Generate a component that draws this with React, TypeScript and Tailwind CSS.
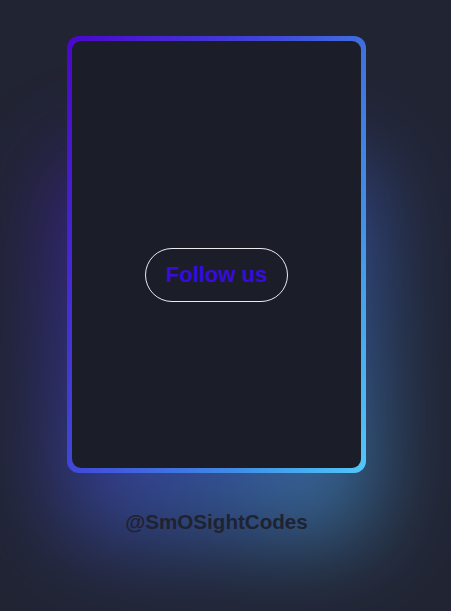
export default function App() {
  return (
    <div className="min-h-[611px] w-full overflow-hidden bg-[#212433]" style={{ fontFamily: '"Liberation Sans", Arial, sans-serif' }}>
      <div className="flex w-[433px] flex-col items-center pt-[36px]">
        <div className="relative h-[437px] w-[299px]">
          {/* glow behind the card */}
          <div className="absolute left-[-10px] right-[-10px] top-[120px] bottom-[-70px] rounded-[40px] bg-[linear-gradient(120deg,#4a12c9_0%,#3f6fe0_60%,#52c5f8_100%)] opacity-55 blur-[45px]" />
          <div className="relative h-full w-full rounded-[12px] bg-[linear-gradient(115deg,#4a06cb_0%,#4046d8_40%,#4090e6_75%,#52c8f8_100%)] p-[5px]">
            <div className="flex h-full w-full items-center justify-center rounded-[9px] bg-[#1b1e29] pt-[40px]">
              <button className="flex h-[54px] w-[143px] items-center justify-center rounded-full border-[1.5px] border-[#ececf0] text-[22px] font-bold text-[#380cdc]">
                Follow us
              </button>
            </div>
          </div>
        </div>
        <p className="relative mt-[39px] text-[20.6px] font-bold leading-none text-[#1f2231]">@SmOSightCodes</p>
      </div>
    </div>
  );
}
